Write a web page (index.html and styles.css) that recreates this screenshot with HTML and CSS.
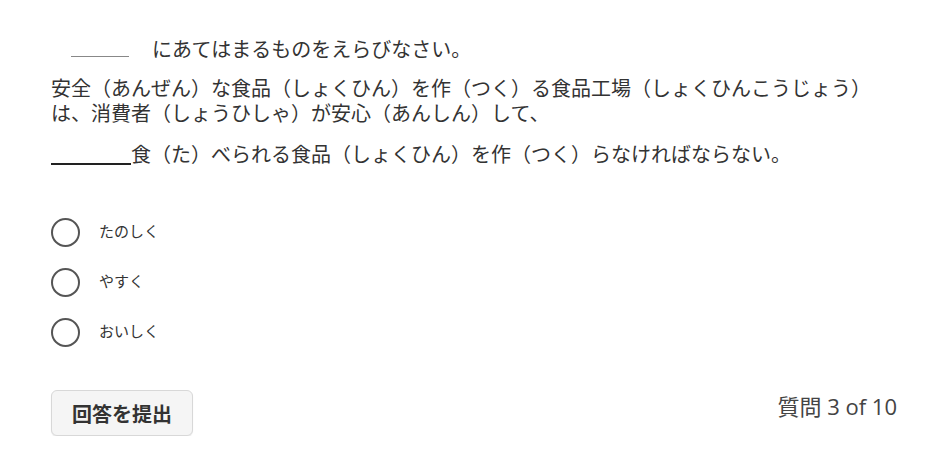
FILE: index.html
```html
<!DOCTYPE html>
<html lang="ja">
<head>
<meta charset="utf-8">
<link rel="stylesheet" href="styles.css">
</head>
<body>
<div class="quiz">
  <p class="instruction"><span class="blank-small"></span>にあてはまるものをえらびなさい。</p>
  <p class="sentence">安全（あんぜん）な食品（しょくひん）を作（つく）る食品工場（しょくひんこうじょう）<br>は、消費者（しょうひしゃ）が安心（あんしん）して、</p>
  <p class="sentence2"><span class="blank-big"></span>食（た）べられる食品（しょくひん）を作（つく）らなければならない。</p>
  <div class="options">
    <label class="option"><span class="radio"></span><span class="label">たのしく</span></label>
    <label class="option"><span class="radio"></span><span class="label">やすく</span></label>
    <label class="option"><span class="radio"></span><span class="label">おいしく</span></label>
  </div>
  <div class="footer">
    <button class="submit">回答を提出</button>
    <span class="counter">質問 3 of 10</span>
  </div>
</div>
</body>
</html>
```
FILE: styles.css
```css
html, body {
  margin: 0;
  padding: 0;
  background: #ffffff;
}
body {
  font-family: "Open Sans", "Noto Sans CJK JP", sans-serif;
  color: #333333;
}
.quiz {
  padding: 36px 49px 0 51px;
}
p {
  margin: 0;
  font-size: 20px;
  line-height: 25px;
  font-family: "Noto Sans CJK JP", sans-serif;
}
.instruction {
  padding-left: 20px;
}
.blank-small {
  display: inline-block;
  width: 58px;
  height: 15px;
  border-bottom: 1px solid #888;
  margin-right: 23px;
  vertical-align: 0;
}
.sentence {
  margin-top: 14px;
}
.sentence2 {
  margin-top: 16px;
}
.blank-big {
  display: inline-block;
  width: 80px;
  height: 10px;
  border-bottom: 2px solid #222;
  vertical-align: -3px;
}
.options {
  margin-top: 52px;
  display: flex;
  flex-direction: column;
  gap: 22px;
}
.option {
  display: flex;
  align-items: center;
  height: 28px;
}
.radio {
  box-sizing: border-box;
  width: 29px;
  height: 29px;
  border: 2px solid #555;
  border-radius: 50%;
  margin-right: 19px;
}
.label {
  font-family: "Noto Sans CJK JP", sans-serif;
  font-size: 15px;
  line-height: 20px;
  margin-top: -3px;
  color: #333;
}
.footer {
  margin-top: 44px;
  display: flex;
  justify-content: space-between;
  align-items: flex-start;
}
.submit {
  box-sizing: border-box;
  width: 142px;
  height: 46px;
  background: #f5f5f5;
  border: 1px solid #d8d8d8;
  border-radius: 6px;
  font-family: "Noto Sans CJK JP", sans-serif;
  font-weight: 700;
  font-size: 20px;
  color: #333;
  padding: 0;
  box-shadow: 0 1px 1px rgba(0,0,0,0.08);
}
.counter {
  font-family: "Open Sans", "Noto Sans CJK JP", sans-serif;
  font-size: 22px;
  line-height: 30px;
  color: #444;
  margin-top: 1px;
}
```
